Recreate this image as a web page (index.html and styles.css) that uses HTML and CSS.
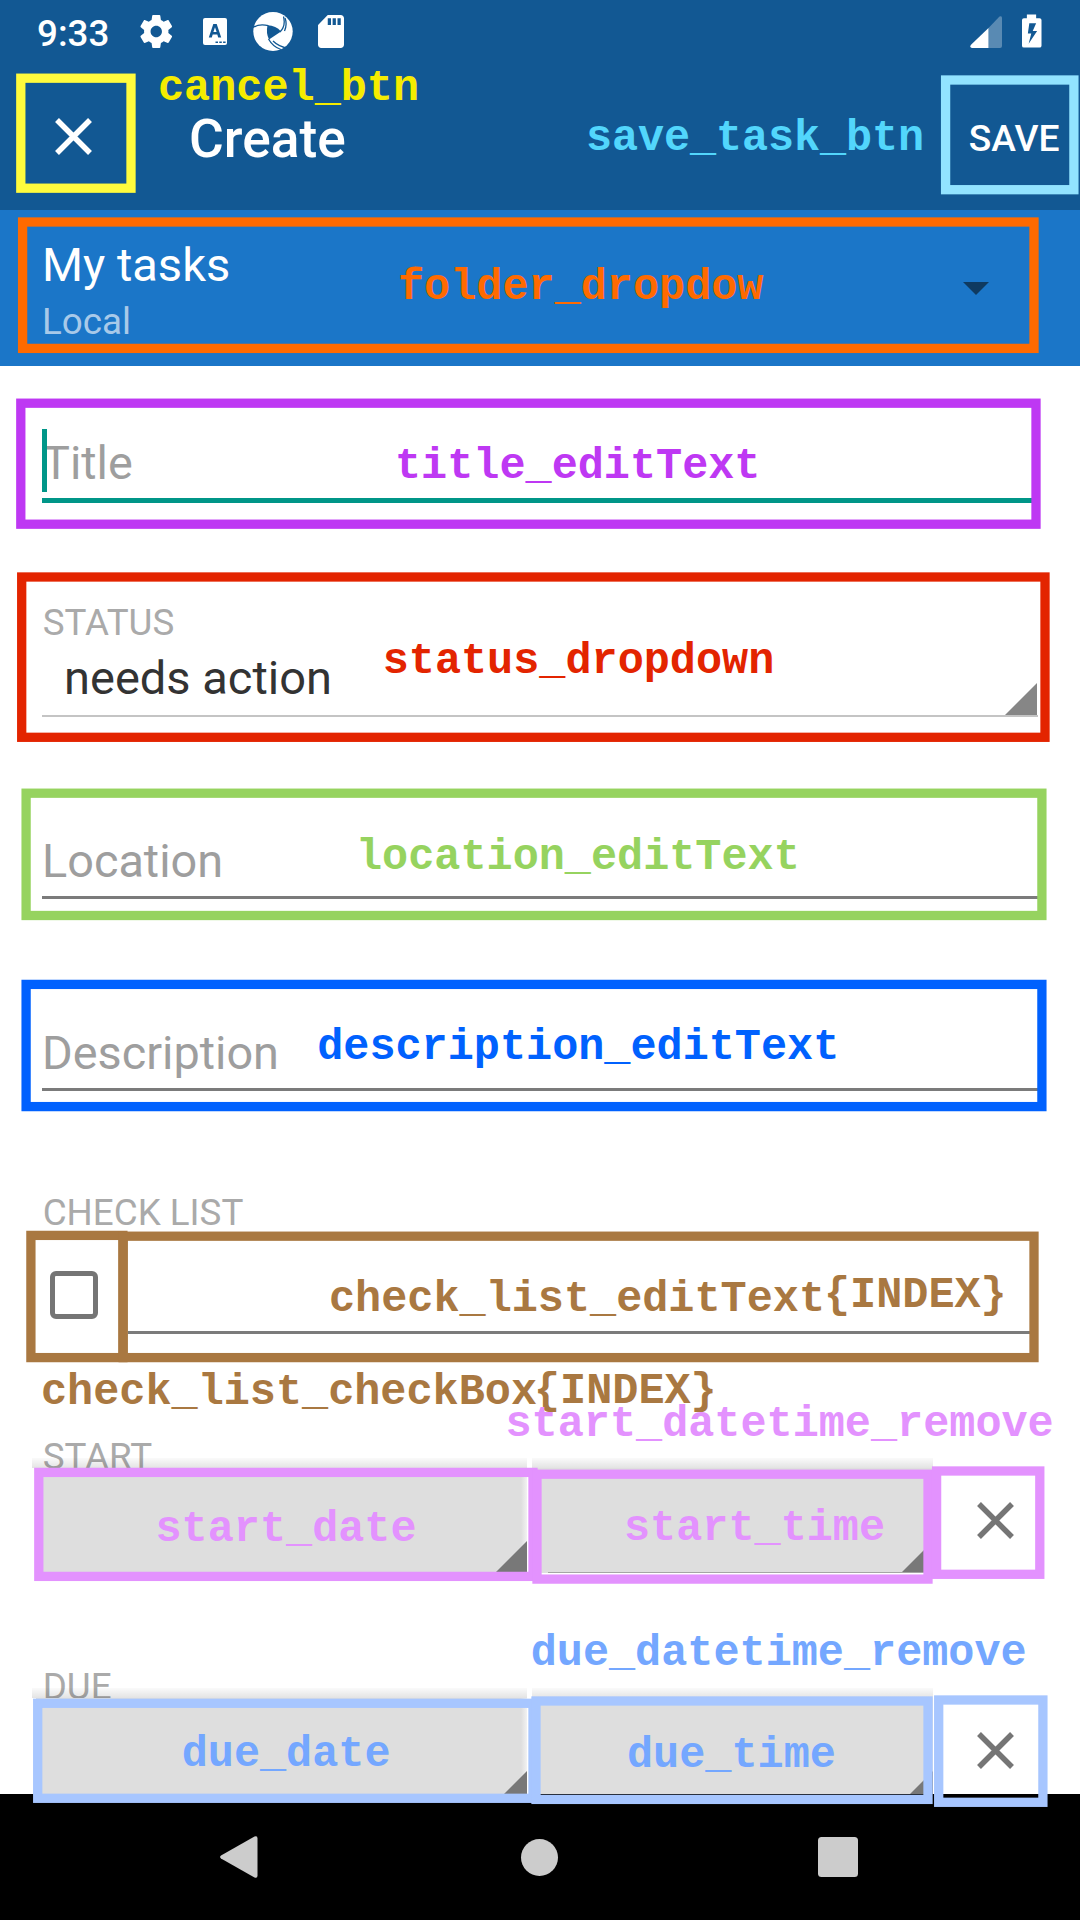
FILE: index.html
```html
<!DOCTYPE html>
<html lang="en">
<head>
<meta charset="utf-8">
<title>Create task</title>
<link rel="stylesheet" href="styles.css">
</head>
<body>
<div class="screen">
  <header class="top">
    <div class="status-bar">
      <span class="clock">9:33</span>
      <svg class="ic-gear" viewBox="2 2 20 20" preserveAspectRatio="none"><path d="M19.43 12.98c.04-.32.07-.64.07-.98s-.03-.66-.07-.98l2.11-1.65c.19-.15.24-.42.12-.64l-2-3.46c-.12-.22-.39-.3-.61-.22l-2.49 1c-.52-.4-1.08-.73-1.69-.98l-.38-2.65C14.46 2.18 14.25 2 14 2h-4c-.25 0-.46.18-.49.42l-.38 2.65c-.61.25-1.17.59-1.69.98l-2.49-1c-.23-.09-.49 0-.61.22l-2 3.46c-.13.22-.07.49.12.64l2.11 1.65c-.04.32-.07.65-.07.98s.03.66.07.98l-2.11 1.65c-.19.15-.24.42-.12.64l2 3.46c.12.22.39.3.61.22l2.49-1c.52.4 1.08.73 1.69.98l.38 2.65c.03.24.24.42.49.42h4c.25 0 .46-.18.49-.42l.38-2.65c.61-.25 1.17-.59 1.69-.98l2.49 1c.23.09.49 0 .61-.22l2-3.46c.12-.22.07-.49-.12-.64l-2.11-1.65zM12 15.5c-1.93 0-3.5-1.57-3.5-3.5s1.57-3.5 3.5-3.5 3.5 1.57 3.5 3.5-1.57 3.5-3.5 3.5z"/></svg>
      <svg class="ic-app" viewBox="0 0 24 27"><rect width="24" height="27" rx="2"/><path class="cut" d="M10.300 6h3.400L18.200 19.500h-3l-.9-3H9.700l-.9 3h-3zM12 9.300 10.400 14.100h3.200zM12.500 23.500h2.500v1.600h-2.500zM16.300 23.500h2.500v1.600h-2.500zM20.100 23.500h2.500v1.600h-2.500z" fill-rule="evenodd"/></svg>
      <svg class="ic-swirl" viewBox="0 0 40 39"><ellipse cx="20" cy="19.500" rx="19.700" ry="19.500"/><path class="cut" d="M14.500 13.300Q23 13.500 28 19.500L16 27.500Q12.800 21 14.500 13.300z"/><path class="cutline" d="M0 15.500Q6 11.500 15.500 13.700M27 20Q33 14 30.500 4.500M15.500 27Q20 35 28 37.500"/><path class="cutline" d="M31.500 19Q34.500 12 32 6M20 29Q26 35 36 36.500"/></svg>
      <svg class="ic-sd" viewBox="4 2 16 20" preserveAspectRatio="none"><path d="M18 2h-8L4.020 8 4 20c0 1.100.9 2 2 2h12c1.100 0 2-.9 2-2V4c0-1.100-.9-2-2-2zm-6 6h-2V4h2v4zm3 0h-2V4h2v4zm3 0h-2V4h2v4z"/></svg>
      <span class="grow"></span>
      <svg class="ic-signal" viewBox="0 0 32 32"><path opacity=".3" d="M18.500 32V12L29.500.6Q32-.8 32 2v28q0 2-2 2z"/><path d="M18.500 12v20H2q-3-.7-1-3.300z"/></svg>
      <svg class="ic-battery" viewBox="0 0 20 34"><path fill-rule="evenodd" d="M5 0h9.500v3.800H18q2 0 2 2V32q0 2-2 2H2q-2 0-2-2V5.800q0-2 2-2h3zM7.500 9 6 19.500h3.500L6.800 30 15.500 17H11L14.500 9z"/></svg>
    </div>
    <div class="app-bar">
      <svg class="ic-close" viewBox="0 0 37 37"><path d="M2 2 35 35M35 2 2 35"/></svg>
      <h1 class="title">Create</h1>
      <span class="grow"></span>
      <span class="save">SAVE</span>
    </div>
  </header>

  <section class="folder">
    <div class="folder-text">
      <div class="folder-name">My tasks</div>
      <div class="folder-account">Local</div>
    </div>
    <svg class="ic-caret" viewBox="0 0 26 13"><path d="M0 0h26L13 13z"/></svg>
  </section>

  <main class="form">
    <div class="field field-title"><span class="cursor"></span><span class="text">Title</span></div>
    <div class="group-status">
      <div class="label">STATUS</div>
      <div class="spinner"><span class="text">needs action</span><svg class="corner" viewBox="0 0 32 32"><path d="M32 0v32H0z"/></svg></div>
    </div>
    <div class="field field-location"><span class="text">Location</span></div>
    <div class="field field-description"><span class="text">Description</span></div>
    <div class="group-check">
      <div class="label">CHECK LIST</div>
      <div class="check-row"><span class="checkbox"></span><span class="check-input"></span></div>
    </div>
    <div class="group-date">
      <div class="label label-date">START</div>
      <div class="date-row">
        <div class="date-btn"><svg class="corner" viewBox="0 0 32 32"><path d="M32 0v32H0z"/></svg></div>
        <div class="date-btn time-btn"><svg class="corner" viewBox="0 0 32 32"><path d="M32 0v32H0z"/></svg></div>
        <svg class="ic-remove" viewBox="0 0 37 37"><path d="M2 2 35 35M35 2 2 35"/></svg>
      </div>
    </div>
    <div class="group-date group-due">
      <div class="label label-date">DUE</div>
      <div class="date-row">
        <div class="date-btn"><svg class="corner" viewBox="0 0 32 32"><path d="M32 0v32H0z"/></svg></div>
        <div class="date-btn time-btn"><svg class="corner" viewBox="0 0 32 32"><path d="M32 0v32H0z"/></svg></div>
        <svg class="ic-remove" viewBox="0 0 37 37"><path d="M2 2 35 35M35 2 2 35"/></svg>
      </div>
    </div>
  </main>

  <nav class="nav-bar">
    <svg class="nav-back" viewBox="0 0 38 44" preserveAspectRatio="none"><path d="M34.500.5Q37.500-.8 37.500 2.500V41.500Q37.500 44.800 34.500 43.500L1 23.500Q-.8 22 1 20.500z"/></svg>
    <svg class="nav-home" viewBox="0 0 37 37"><circle cx="18.500" cy="18.500" r="18.500"/></svg>
    <svg class="nav-recent" viewBox="0 0 40 40"><rect width="40" height="40" rx="3.500"/></svg>
  </nav>

  <!-- View id annotations over the screen -->
  <svg class="frames" viewBox="0 0 1080 1920">
    <rect class="yellow" x="20.800" y="78.200" width="110.200" height="110"/>
    <rect class="cyan" x="945.600" y="80" width="128.300" height="109.700"/>
    <rect class="orange" x="22.600" y="222" width="1011.400" height="126.400"/>
    <rect class="purple" x="20.800" y="403.200" width="1015.200" height="121"/>
    <rect class="red" x="21.700" y="577" width="1023.300" height="160.300"/>
    <rect class="green" x="26.100" y="793.200" width="1015.800" height="122.300"/>
    <rect class="blue" x="26.100" y="984.400" width="1015.800" height="122.200"/>
    <rect class="brown" x="30.900" y="1235.400" width="92" height="122.200"/>
    <rect class="brown" x="123.200" y="1236.200" width="910.800" height="121.400"/>
    <rect class="pink" x="38.800" y="1472.400" width="494.200" height="104"/>
    <rect class="pink" x="537" y="1474.200" width="391" height="104.900"/>
    <rect class="pink" x="936.600" y="1471" width="103.200" height="103.300"/>
    <rect class="sky" x="37.700" y="1703.300" width="495.300" height="95"/>
    <rect class="sky" x="536" y="1701" width="392" height="98.400"/>
    <rect class="sky" x="938.700" y="1700" width="104.200" height="102.300"/>
  </svg>
  <div class="tags">
    <span class="tag t-cancel">cancel_btn</span>
    <span class="tag t-save">save_task_btn</span>
    <span class="tag t-folder">folder_dropdow</span>
    <span class="tag t-title">title_editText</span>
    <span class="tag t-status">status_dropdown</span>
    <span class="tag t-location">location_editText</span>
    <span class="tag t-description">description_editText</span>
    <span class="tag t-check-edit">check_list_editText<span class="index">{INDEX}</span></span>
    <span class="tag t-check-box">check_list_checkBox<span class="index">{INDEX}</span></span>
    <span class="tag t-start-remove">start_datetime_remove</span>
    <span class="tag t-start-date">start_date</span>
    <span class="tag t-start-time">start_time</span>
    <span class="tag t-due-remove">due_datetime_remove</span>
    <span class="tag t-due-date">due_date</span>
    <span class="tag t-due-time">due_time</span>
  </div>
</div>
</body>
</html>
```
FILE: styles.css
```css
* { box-sizing: border-box; }
body { margin: 0; background: #fff; font-family: Roboto, "Liberation Sans", sans-serif; }
svg { display: block; flex: none; overflow: visible; }
.screen { position: relative; width: 1080px; height: 1920px; display: flex; flex-direction: column; overflow: hidden; }
.grow { flex: 1; }

/* Status and app bars */
.top { height: 210px; flex: none; background: #125893; color: #fff; }
.status-bar { height: 63px; display: flex; align-items: center; padding: 0 38.600px 0 37px; fill: #fff; }
.clock { width: 103px; font-size: 36.750px; font-weight: 500; line-height: 60px; padding-top: 4px; }
.ic-gear { width: 32.500px; height: 33px; }
.ic-app { width: 24px; height: 27px; margin-left: 30px; }
.ic-swirl { width: 40px; height: 39px; margin-left: 26px; }
.ic-sd { width: 26px; height: 33px; margin-left: 25px; }
.ic-signal { width: 32px; height: 32px; margin-right: 19.500px; }
.ic-battery { width: 19.500px; height: 34px; margin-top: -1px; }
.cut { fill: #125893; }
.cutline { fill: none; stroke: #125893; stroke-width: 1.300; }
.app-bar { height: 147px; display: flex; align-items: center; padding: 0 20.500px 0 55px; }
.ic-close { width: 37px; height: 37px; }
.ic-close path { fill: none; stroke: #fff; stroke-width: 5.500; }
.title { margin: 4px 0 0 97px; font-size: 53.300px; font-weight: 500; line-height: 60px; }
.save { margin-top: 2px; font-size: 37.200px; font-weight: 500; line-height: 44px; }

/* Folder selector */
.folder { height: 156px; flex: none; display: flex; justify-content: space-between; background: #1b76c8; padding: 27px 91.500px 0 42px; color: #fff; }
.folder-name { font-size: 47px; line-height: 56px; }
.folder-account { margin-top: 6.600px; font-size: 36.750px; line-height: 44px; color: #a8c9e9; }
.ic-caret { width: 26px; height: 13px; margin-top: 45px; fill: #0f3a60; }

/* Form */
.form { flex: 1; min-height: 0; overflow: hidden; display: flex; flex-direction: column; padding: 0 42px; }
.form > * { flex: none; }
.text { font-size: 47px; }
.field { position: relative; height: 74px; color: #9e9e9e; line-height: 73px; border-bottom: 3px solid #7b7b7b; }
.field .text { font-size: 46.800px; }
.field-title { height: 76px; margin-top: 61px; border-bottom: 5px solid #009688; }
.cursor { position: absolute; left: 0; top: 2px; width: 5px; height: 63px; background: #009688; }
.label { font-size: 36.750px; line-height: 45px; color: #aaa; padding-left: .700px; }
.group-status { margin-top: 97px; }
.spinner { height: 72px; display: flex; justify-content: space-between; align-items: flex-end; padding-left: 22px; line-height: 66px; color: #333; border-bottom: 2px solid #c4c4c4; }
.spinner .text { align-self: flex-start; }
.corner { width: 32px; height: 32px; fill: #787878; }
.spinner .corner { fill: #868686; margin-right: .700px; }
.field-location { margin-top: 108px; }
.field-description { margin-top: 118px; }
.group-check { margin-top: 99px; }
.check-row { height: 99px; display: flex; }
.checkbox { width: 48px; height: 48px; margin: 36px 30px 0 8px; border: 5.500px solid #757575; border-radius: 6px; }
.check-input { flex: 1; border-bottom: 3px solid #7b7b7b; }
.group-date { margin-top: 100px; }
.group-due { margin-top: 91px; }
.label-date { height: 34px; white-space: nowrap; }
.date-row { display: flex; height: 105px; margin-left: -6px; }
.date-btn { position: relative; width: 491px; display: flex; align-items: flex-end; justify-content: flex-end; background: linear-gradient(to right, #dedede 485px, #f2f2f2 491px); }
.date-btn::before { content: ""; position: absolute; left: -4px; right: 0; top: -10px; height: 10px; background: linear-gradient(rgba(0,0,0,.02), rgba(0,0,0,.11)); }
.time-btn { width: 397px; margin-left: 9px; background: #dedede; }
.time-btn::after { content: ""; position: absolute; left: 12px; right: 0; bottom: 0; height: 1px; background: #a5a5a5; }
.ic-remove { width: 37px; height: 37px; margin: 34px 0 0 44px; }
.ic-remove path { fill: none; stroke: #757575; stroke-width: 5.500; }

/* System navigation */
.nav-bar { height: 126px; flex: none; display: flex; align-items: center; background: #000; fill: #ccc; padding-left: 219.500px; }
.nav-back { width: 38px; height: 42px; }
.nav-home { width: 37px; height: 37px; margin-left: 263.500px; }
.nav-recent { width: 40px; height: 40px; margin-left: 260px; }

/* Annotation overlay */
.frames { position: absolute; left: 0; top: 0; width: 1080px; height: 1920px; fill: none; stroke-width: 9.300; }
.yellow { stroke: #fffb3d; }
.cyan { stroke: #92e3ff; }
.orange { stroke: #ff6a00; }
.purple { stroke: #be38f3; }
.red { stroke: #e32400; }
.green { stroke: #96d35f; }
.blue { stroke: #0061fe; }
.brown { stroke: #a97841; }
.pink { stroke: #e392fe; }
.sky { stroke: #a7c6ff; }
.tag { position: absolute; font: bold 43.500px/48px "Liberation Mono", monospace; white-space: pre; }
.index { position: relative; left: -1px; top: -4px; }
.t-cancel { left: 158px; top: 65px; color: #f5ec00; }
.t-save { left: 586px; top: 115px; color: #52d6fc; letter-spacing: -.1px; }
.t-folder { left: 398px; top: 264px; color: #ff6a00; }
.t-title { left: 395px; top: 443px; color: #be38f3; }
.t-status { left: 382.700px; top: 638px; color: #e32400; }
.t-location { left: 356px; top: 834px; color: #96d35f; }
.t-description { left: 317.200px; top: 1024px; color: #0061fe; }
.t-check-edit { left: 329px; top: 1276px; color: #a97841; }
.t-check-box { left: 41px; top: 1369px; color: #a97841; }
.t-check-box .index { top: -1.500px; left: -3px; }
.t-start-remove { left: 505.500px; top: 1401px; color: #e392fe; }
.t-start-date { left: 155.500px; top: 1506px; color: #e392fe; }
.t-start-time { left: 624px; top: 1505px; color: #e392fe; }
.t-due-remove { left: 530.700px; top: 1630px; color: #74a7ff; }
.t-due-date { left: 181.700px; top: 1731px; color: #74a7ff; }
.t-due-time { left: 627px; top: 1732px; color: #74a7ff; }
```
